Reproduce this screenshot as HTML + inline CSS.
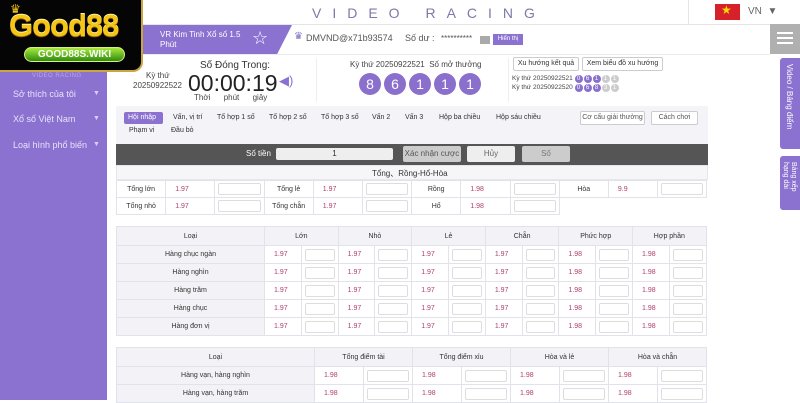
<!DOCTYPE html>
<html><head><meta charset="utf-8"><style>
*{box-sizing:border-box;margin:0;padding:0}
body{width:800px;height:400px;overflow:hidden;background:#fff;font-family:"Liberation Sans","DejaVu Sans",sans-serif;position:relative;color:#333}
.a{position:absolute}
.t{position:absolute;white-space:nowrap}
table{position:absolute;border-collapse:collapse;font-size:7px;table-layout:fixed}
td{border:1px solid #e2e2ea;text-align:center;color:#333;padding:0}
td.h{background:#f2f2f7}
td.o{color:#b0406a;text-align:left;padding-left:9px}
td i{display:block;margin:0 3px;height:12px;border:1px solid #ddd;border-radius:2px;background:#fff}
.ball{position:absolute;width:22px;height:22px;border-radius:50%;background:#8a70cc;color:#fff;font-size:14px;text-align:center;line-height:22px}
.sb{display:inline-block;width:8px;height:8px;border-radius:50%;background:#8a70cc;color:#fff;font-size:6px;line-height:8px;text-align:center;margin-right:1px}
.sb.g{background:#ccc}
.btn{position:absolute;border:1px solid #ccc;border-radius:2px;font-size:7px;text-align:center;background:#fff}
</style></head><body>
<!-- sidebar -->
<div class="a" style="left:0;top:0;width:107px;height:400px;background:#8b72d0"></div>
<div class="t" style="left:32px;top:73px;font-size:6px;color:#b7a8e6;letter-spacing:.5px">VIDEO RACING</div>
<div class="t" style="left:13px;top:89px;font-size:9px;color:#e8e2fa">Sở thích của tôi</div>
<div class="t" style="left:13px;top:114px;font-size:9px;color:#e8e2fa">Xổ số Việt Nam</div>
<div class="t" style="left:13px;top:140px;font-size:9px;color:#e8e2fa">Loại hình phổ biến</div>
<div class="t" style="left:93px;top:90px;font-size:7px;color:#d8cff5">▼</div>
<div class="t" style="left:93px;top:115px;font-size:7px;color:#d8cff5">▼</div>
<div class="t" style="left:93px;top:141px;font-size:7px;color:#d8cff5">▼</div>
<!-- header -->
<div class="a" style="left:107px;top:24px;width:693px;height:1px;background:#e5e5e5"></div>
<div class="t" style="left:312px;top:5px;font-size:14px;color:#7c7aa8;letter-spacing:11px">VIDEO RACING</div>
<div class="a" style="left:688px;top:0;width:1px;height:24px;background:#e5e5e5"></div>
<div class="a" style="left:715px;top:4px;width:25px;height:16px;background:#d6202a"></div>
<div class="t" style="left:721px;top:3px;font-size:12px;color:#ffd800">★</div>
<div class="t" style="left:748px;top:6px;font-size:10px;color:#666">VN&nbsp;&nbsp;▼</div>
<!-- second row -->
<div class="a" style="left:107px;top:25px;width:185px;height:29px;background:#8b72d0;clip-path:polygon(0 0,100% 0,92% 100%,0 100%)"></div>
<div class="t" style="left:160px;top:30px;font-size:8px;color:#fff;line-height:10px">VR Kim Tinh Xổ số 1.5<br>Phút</div>
<div class="t" style="left:252px;top:28px;font-size:18px;color:#fff">☆</div>
<div class="t" style="left:294px;top:31px;font-size:10px;color:#7f6fc4">♛</div>
<div class="t" style="left:306px;top:33px;font-size:9px;color:#555">DMVND@x71b93574</div>
<div class="t" style="left:405px;top:33px;font-size:9px;color:#555">Số dư :</div>
<div class="t" style="left:441px;top:34px;font-size:8px;color:#555">**********</div>
<div class="a" style="left:480px;top:36px;width:10px;height:8px;background:#aaa"></div>
<div class="a" style="left:493px;top:34px;width:30px;height:11px;background:#8b72d0;color:#fff;font-size:6px;text-align:center;line-height:11px">Hiển thị</div>
<div class="a" style="left:107px;top:54px;width:663px;height:1px;background:#ececec"></div>
<div class="a" style="left:770px;top:24px;width:30px;height:30px;background:#b0b0b0"></div>
<div class="a" style="left:777px;top:32px;width:16px;height:2px;background:#fff;box-shadow:0 5px 0 #fff,0 10px 0 #fff"></div>
<div class="a" style="left:780px;top:58px;width:20px;height:91px;background:#8b72d0;border-radius:3px 0 0 3px"></div>
<div class="t" style="left:785px;top:64px;font-size:8px;color:#fff;writing-mode:vertical-rl">Video / Bảng điểm</div>
<div class="a" style="left:780px;top:156px;width:20px;height:54px;background:#8b72d0;border-radius:3px 0 0 3px"></div>
<div class="t" style="left:781px;top:162px;font-size:7px;line-height:8px;color:#fff;writing-mode:vertical-rl">Bảng xếp<br>hạng dài</div>
<!-- timer -->
<div class="t" style="left:146px;top:71px;font-size:8px;color:#444">Kỳ thứ</div>
<div class="t" style="left:133px;top:81px;font-size:8px;color:#444">20250922522</div>
<div class="t" style="left:200px;top:60px;font-size:10px;color:#333">Số Đóng Trong:</div>
<div class="t" style="left:188px;top:70px;font-size:23px;color:#222">00:00:19</div>
<div class="t" style="left:279px;top:73px;font-size:13px;color:#8b72d0">◀)</div>
<div class="t" style="left:194px;top:93px;font-size:8px;color:#444">Thời&nbsp;&nbsp;&nbsp;&nbsp;&nbsp;&nbsp;phút&nbsp;&nbsp;&nbsp;&nbsp;&nbsp;&nbsp;giây</div>
<div class="a" style="left:316px;top:58px;width:1px;height:44px;background:#eee"></div>
<div class="t" style="left:350px;top:60px;font-size:8px;color:#444">Kỳ thứ 20250922521&nbsp;&nbsp;Số mở thưởng</div>
<div class="ball" style="left:359px;top:73px">8</div>
<div class="ball" style="left:384px;top:73px">6</div>
<div class="ball" style="left:409px;top:73px">1</div>
<div class="ball" style="left:434px;top:73px">1</div>
<div class="ball" style="left:459px;top:73px">1</div>
<div class="a" style="left:508px;top:58px;width:1px;height:44px;background:#eee"></div>
<div class="btn" style="left:513px;top:57px;width:66px;height:14px;line-height:12px">Xu hướng kết quả</div>
<div class="btn" style="left:582px;top:57px;width:81px;height:14px;line-height:12px">Xem biểu đồ xu hướng</div>
<div class="t" style="left:512px;top:75px;font-size:6.5px;color:#444">Kỳ thứ 20250922521 <span class="sb">0</span><span class="sb">6</span><span class="sb">1</span><span class="sb g">1</span><span class="sb g">1</span></div>
<div class="t" style="left:512px;top:84px;font-size:6.5px;color:#444">Kỳ thứ 20250922520 <span class="sb">0</span><span class="sb">6</span><span class="sb">8</span><span class="sb g">3</span><span class="sb g">1</span></div>
<!-- tabs -->
<div class="a" style="left:116px;top:106px;width:592px;height:38px;background:#f3f3f8"></div>
<div class="a" style="left:124px;top:112px;width:39px;height:12px;background:#8b72d0;border-radius:2px"></div>
<div class="t" style="left:128px;top:114px;font-size:7px;color:#fff">Hội nhập</div>
<div class="t" style="left:173px;top:114px;font-size:7px;color:#333">Vấn, vị trí</div>
<div class="t" style="left:217px;top:114px;font-size:7px;color:#333">Tổ hợp 1 số</div>
<div class="t" style="left:269px;top:114px;font-size:7px;color:#333">Tổ hợp 2 số</div>
<div class="t" style="left:321px;top:114px;font-size:7px;color:#333">Tổ hợp 3 số</div>
<div class="t" style="left:372px;top:114px;font-size:7px;color:#333">Vấn 2</div>
<div class="t" style="left:405px;top:114px;font-size:7px;color:#333">Vấn 3</div>
<div class="t" style="left:439px;top:114px;font-size:7px;color:#333">Hộp ba chiều</div>
<div class="t" style="left:496px;top:114px;font-size:7px;color:#333">Hộp sáu chiều</div>
<div class="t" style="left:129px;top:127px;font-size:7px;color:#333">Phạm vi</div>
<div class="t" style="left:171px;top:127px;font-size:7px;color:#333">Đầu bỏ</div>
<div class="btn" style="left:580px;top:111px;width:65px;height:14px;line-height:12px;color:#555">Cơ cấu giải thưởng</div>
<div class="btn" style="left:651px;top:111px;width:47px;height:14px;line-height:12px;color:#555">Cách chơi</div>
<!-- dark bar -->
<div class="a" style="left:116px;top:144px;width:592px;height:21px;background:#555"></div>
<div class="t" style="left:246px;top:149px;font-size:8px;color:#fff">Số tiền</div>
<div class="a" style="left:276px;top:148px;width:117px;height:12px;background:#eee;border-radius:2px;font-size:8px;text-align:center;line-height:12px">1</div>
<div class="a" style="left:403px;top:146px;width:58px;height:16px;background:#ccc;border-radius:2px;font-size:8px;text-align:center;line-height:16px;color:#555">Xác nhận cược</div>
<div class="a" style="left:467px;top:146px;width:48px;height:16px;background:#eee;border-radius:2px;font-size:8px;text-align:center;line-height:16px;color:#666">Hủy</div>
<div class="a" style="left:522px;top:146px;width:48px;height:16px;background:#ccc;border-radius:2px;font-size:8px;text-align:center;line-height:16px;color:#777">Số</div>
<div class="a" style="left:116px;top:165px;width:592px;height:15px;background:#f6f6f9;border:1px solid #e6e6ec"></div>
<div class="t" style="left:372px;top:168px;font-size:8px;color:#333">Tổng、Rồng-Hổ-Hòa</div>
<table style="left:116px;top:180px;width:590px">
<colgroup><col span="12" style="width:49.2px"></colgroup>
<tr style="height:17px"><td>Tổng lớn</td><td class="o">1.97</td><td><i></i></td><td>Tổng lẻ</td><td class="o">1.97</td><td><i></i></td><td>Rồng</td><td class="o">1.98</td><td><i></i></td><td>Hòa</td><td class="o">9.9</td><td><i></i></td></tr>
<tr style="height:17px"><td>Tổng nhỏ</td><td class="o">1.97</td><td><i></i></td><td>Tổng chẵn</td><td class="o">1.97</td><td><i></i></td><td>Hổ</td><td class="o">1.98</td><td><i></i></td><td style="border:none"></td><td style="border:none"></td><td style="border:none"></td></tr>
</table>
<table style="left:116px;top:226px;width:590px">
<colgroup><col style="width:148px"><col span="12" style="width:36.8px"></colgroup>
<tr style="height:19px"><td class="h">Loại</td><td class="h" colspan="2">Lớn</td><td class="h" colspan="2">Nhỏ</td><td class="h" colspan="2">Lẻ</td><td class="h" colspan="2">Chẵn</td><td class="h" colspan="2">Phức hợp</td><td class="h" colspan="2">Hợp phần</td></tr>
<tr style="height:18px"><td class="h">Hàng chục ngàn</td><td class="o">1.97</td><td><i></i></td><td class="o">1.97</td><td><i></i></td><td class="o">1.97</td><td><i></i></td><td class="o">1.97</td><td><i></i></td><td class="o">1.98</td><td><i></i></td><td class="o">1.98</td><td><i></i></td></tr>
<tr style="height:18px"><td class="h">Hàng nghìn</td><td class="o">1.97</td><td><i></i></td><td class="o">1.97</td><td><i></i></td><td class="o">1.97</td><td><i></i></td><td class="o">1.97</td><td><i></i></td><td class="o">1.98</td><td><i></i></td><td class="o">1.98</td><td><i></i></td></tr>
<tr style="height:18px"><td class="h">Hàng trăm</td><td class="o">1.97</td><td><i></i></td><td class="o">1.97</td><td><i></i></td><td class="o">1.97</td><td><i></i></td><td class="o">1.97</td><td><i></i></td><td class="o">1.98</td><td><i></i></td><td class="o">1.98</td><td><i></i></td></tr>
<tr style="height:18px"><td class="h">Hàng chục</td><td class="o">1.97</td><td><i></i></td><td class="o">1.97</td><td><i></i></td><td class="o">1.97</td><td><i></i></td><td class="o">1.97</td><td><i></i></td><td class="o">1.98</td><td><i></i></td><td class="o">1.98</td><td><i></i></td></tr>
<tr style="height:18px"><td class="h">Hàng đơn vị</td><td class="o">1.97</td><td><i></i></td><td class="o">1.97</td><td><i></i></td><td class="o">1.97</td><td><i></i></td><td class="o">1.97</td><td><i></i></td><td class="o">1.98</td><td><i></i></td><td class="o">1.98</td><td><i></i></td></tr>
</table>
<table style="left:116px;top:347px;width:590px">
<colgroup><col style="width:198px"><col span="8" style="width:49px"></colgroup>
<tr style="height:19px"><td class="h">Loại</td><td class="h" colspan="2">Tổng điểm tài</td><td class="h" colspan="2">Tổng điểm xỉu</td><td class="h" colspan="2">Hòa và lẻ</td><td class="h" colspan="2">Hòa và chẵn</td></tr>
<tr style="height:18px"><td class="h">Hàng vạn, hàng nghìn</td><td class="o">1.98</td><td><i></i></td><td class="o">1.98</td><td><i></i></td><td class="o">1.98</td><td><i></i></td><td class="o">1.98</td><td><i></i></td></tr>
<tr style="height:18px"><td class="h">Hàng vạn, hàng trăm</td><td class="o">1.98</td><td><i></i></td><td class="o">1.98</td><td><i></i></td><td class="o">1.98</td><td><i></i></td><td class="o">1.98</td><td><i></i></td></tr>
</table>
<!-- logo -->
<div class="a" style="left:0;top:0;width:143px;height:72px;background:#050505;border-radius:0 0 10px 0;border-right:2px solid #c9a640;border-bottom:2px solid #c9a640"></div>
<div class="t" style="left:9px;top:8px;font-size:31px;font-weight:bold;color:#f5c518;letter-spacing:-1px;text-shadow:0 1px 0 #a06a00,0 -1px 0 #fff6a0">Good88</div>
<div class="t" style="left:10px;top:2px;font-size:12px;color:#f5c518">♛</div>
<div class="a" style="left:24px;top:47px;width:101px;height:15px;border-radius:8px;background:linear-gradient(#a6ea3a,#2f8a10);border:1px solid #d8f080;color:#fff;font-size:10px;font-weight:bold;text-align:center;line-height:13px">GOOD88S.WIKI</div>
</body></html>
